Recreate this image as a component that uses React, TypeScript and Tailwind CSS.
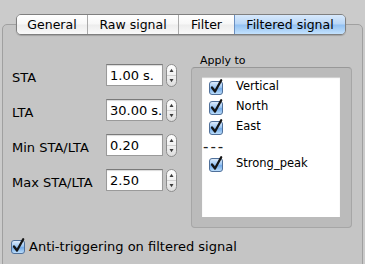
import React from 'react';

const tabs = [
  { label: 'General', w: 'w-[70px]' },
  { label: 'Raw signal', w: 'w-[91px] border-l border-[#a9a9a9]' },
  { label: 'Filter', w: 'w-[56px] border-l border-[#a9a9a9]' },
  { label: 'Filtered signal', w: 'w-[111px] border-l border-[#6b8fc0]', active: true },
];

const params = [
  { label: 'STA', value: '1.00 s.' },
  { label: 'LTA', value: '30.00 s.' },
  { label: 'Min STA/LTA', value: '0.20' },
  { label: 'Max STA/LTA', value: '2.50' },
];

const Checkbox: React.FC<{ id: string }> = ({ id }) => (
  <svg width="14" height="15" viewBox="0 0 14 15" className="shrink-0 overflow-visible">
    <defs>
      <linearGradient id={id} x1="0" y1="0" x2="0" y2="1">
        <stop offset="0" stopColor="#e3effc" />
        <stop offset="0.45" stopColor="#9cc6f2" />
        <stop offset="0.55" stopColor="#72aae9" />
        <stop offset="1" stopColor="#c2e2fc" />
      </linearGradient>
    </defs>
    <rect x="0.5" y="1.5" width="13" height="13" rx="2.5" fill={`url(#${id})`} stroke="#50709a" />
    <path d="M3 7.5 L6 11.5 L12.2 0.2" fill="none" stroke="#151515" strokeWidth="2.3" strokeLinecap="round" strokeLinejoin="round" />
  </svg>
);

const Stepper: React.FC<{ id: string }> = ({ id }) => (
  <svg width="11" height="23" viewBox="0 0 11 23" className="shrink-0">
    <defs>
      <linearGradient id={id} x1="0" y1="0" x2="0" y2="1">
        <stop offset="0" stopColor="#ffffff" />
        <stop offset="0.5" stopColor="#f1f1f1" />
        <stop offset="1" stopColor="#dcdcdc" />
      </linearGradient>
    </defs>
    <rect x="0.5" y="0.5" width="10" height="22" rx="5" fill={`url(#${id})`} stroke="#8c8c8c" />
    <line x1="1" y1="11.5" x2="10" y2="11.5" stroke="#d0d0d0" />
    <polygon points="3.5,8 5.5,4.8 7.5,8" fill="#3a3a3a" />
    <polygon points="3.5,15 5.5,18.2 7.5,15" fill="#3a3a3a" />
  </svg>
);

const channels = ['Vertical', 'North', 'East'];

export default function App() {
  return (
    <div className="w-[365px] h-[264px] overflow-hidden bg-[#cbcbcb] flex flex-col font-['DejaVu_Sans',sans-serif] text-black">
      {/* tab strip */}
      <div className="relative z-10 shrink-0 ml-[16px] mt-[14px] w-[330px] h-[21px] flex rounded-[5px] border border-[#7f7f7f] overflow-hidden shadow-[0_1px_1px_rgba(0,0,0,0.18)]">
        {tabs.map((t) => (
          <div
            key={t.label}
            className={`${t.w} h-full flex items-center justify-center pt-[1px] text-[12.5px] leading-none whitespace-nowrap ${
              t.active
                ? 'bg-[linear-gradient(to_bottom,#d8e9fc_0%,#b8d6f7_48%,#92c0f1_52%,#c4e2fd_100%)]'
                : 'bg-[linear-gradient(to_bottom,#ffffff_0%,#f7f7f7_48%,#ececec_52%,#f9f9f9_100%)]'
            }`}
          >
            {t.label}
          </div>
        ))}
      </div>

      {/* tab panel */}
      <div className="-mt-[11px] mx-[2px] h-[260px] shrink-0 rounded-[5px] border border-[#a0a0a0] bg-[#c5c5c5] pl-[9px] pt-[30px]">
        <div className="flex items-start">
          <div className="w-[179px] mt-[9px] flex flex-col gap-[13px]">
            {params.map((p, i) => (
              <div key={p.label} className="flex items-center h-[22px]">
                <span className="w-[94px] text-[13px] leading-none pt-[4px] whitespace-nowrap">{p.label}</span>
                <div className="w-[57px] h-[22px] bg-white border border-[#9a9a9a] border-t-[#7a7a7a] shadow-[inset_0_1px_1px_rgba(0,0,0,0.15)] flex items-center pl-[3px] text-[13px] leading-none whitespace-nowrap overflow-hidden">
                  {p.value}
                </div>
                <div className="ml-[3px]">
                  <Stepper id={`st${i}`} />
                </div>
              </div>
            ))}
          </div>

          <div className="w-[161px] flex flex-col">
            <div className="pl-[9px] h-[12px] text-[11px] leading-[12px]">Apply to</div>
            <div className="h-[161px] rounded-[4px] border border-[#a6a6a6] border-t-[#989898] bg-[#bbbbbb] pt-[9px] pl-[10px] pr-[11px] pb-[10px]">
              <div className="h-full bg-white shadow-[inset_0_1px_1px_rgba(0,0,0,0.2)] pt-[3px] pl-[7px] flex flex-col">
                {channels.map((c, i) => (
                  <div key={c} className="h-[14px] mb-[6px] flex items-center gap-[13px]">
                    <Checkbox id={`cb${i}`} />
                    <span className="text-[11.5px] leading-none">{c}</span>
                  </div>
                ))}
                <div className="-ml-[6px] h-[14px] mb-[3px] flex items-center text-[15px] leading-none tracking-[2px] text-[#222]">---</div>
                <div className="h-[14px] flex items-center gap-[13px]">
                  <Checkbox id="cb9" />
                  <span className="text-[11.5px] leading-none">Strong_peak</span>
                </div>
              </div>
            </div>
          </div>
        </div>

        <div className="mt-[11px] -ml-[1px] h-[15px] flex items-center gap-[4px]">
          <Checkbox id="cbanti" />
          <span className="text-[13px] leading-none whitespace-nowrap">Anti-triggering on filtered signal</span>
        </div>
      </div>
    </div>
  );
}
